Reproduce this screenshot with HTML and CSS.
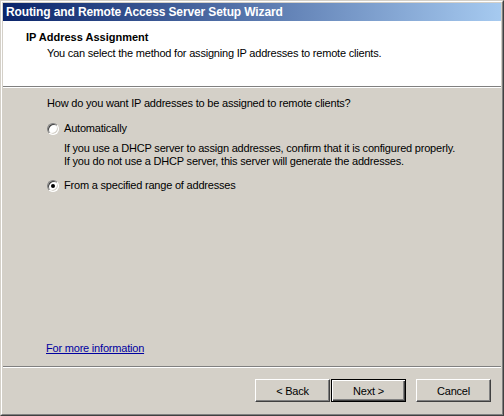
FILE: index.html
```html
<!DOCTYPE html>
<html>
<head>
<meta charset="utf-8">
<link rel="stylesheet" href="styles.css">
</head>
<body>
<div class="window">
  <div class="frame">
    <div class="titlebar">Routing and Remote Access Server Setup Wizard</div>
    <div class="header">
      <div class="h-title">IP Address Assignment</div>
      <div class="h-sub">You can select the method for assigning IP addresses to remote clients.</div>
    </div>
    <div class="sep"></div>
    <div class="content">
      <div class="question">How do you want IP addresses to be assigned to remote clients?</div>
      <div class="option">
        <span class="radio"></span>
        <span class="label">Automatically</span>
      </div>
      <div class="desc">
        <div>If you use a DHCP server to assign addresses, confirm that it is configured properly.</div>
        <div>If you do not use a DHCP server, this server will generate the addresses.</div>
      </div>
      <div class="option option2">
        <span class="radio checked"></span>
        <span class="label">From a specified range of addresses</span>
      </div>
      <a class="more" href="#">For more information</a>
    </div>
    <div class="sep"></div>
    <div class="footer">
      <button class="btn">&lt; Back</button>
      <button class="btn default">Next &gt;</button>
      <button class="btn cancel">Cancel</button>
    </div>
  </div>
</div>
</body>
</html>
```

FILE: styles.css
```css
html, body {
  margin: 0;
  padding: 0;
  background: #D4D0C8;
}
body {
  font-family: "Liberation Sans", Arial, sans-serif;
  font-size: 11px;
  letter-spacing: -0.2px;
  color: #000;
}
.window {
  width: 504px;
  height: 416px;
  box-sizing: border-box;
  border: 1px solid;
  border-color: #D4D0C8 #404040 #404040 #D4D0C8;
  background: #D4D0C8;
}
.frame {
  height: 100%;
  box-sizing: border-box;
  border: 1px solid;
  border-color: #FFFFFF #808080 #808080 #FFFFFF;
  padding: 1px;
  display: flex;
  flex-direction: column;
}
.titlebar {
  height: 18px;
  flex: none;
  background: linear-gradient(to right, #0A246A, #A6CAF0);
  color: #fff;
  font-weight: bold;
  font-size: 12px;
  letter-spacing: -0.12px;
  line-height: 18px;
  padding-left: 3px;
  white-space: nowrap;
}
.header {
  background: #fff;
  height: 65px;
  flex: none;
  box-sizing: border-box;
  padding-top: 10px;
}
.h-title {
  font-weight: bold;
  letter-spacing: 0;
  padding-left: 23px;
  line-height: 13px;
}
.h-sub {
  padding-left: 44px;
  margin-top: 3px;
  line-height: 13px;
}
.sep {
  height: 1px;
  flex: none;
  background: #808080;
  border-bottom: 1px solid #fff;
}
.content {
  flex: 1;
  display: flex;
  flex-direction: column;
  align-items: flex-start;
  padding: 9px 0 11px 44px;
  line-height: 13px;
}
.option {
  display: flex;
  align-items: center;
  margin-top: 12px;
}
.option2 {
  margin-top: 11px;
}
.radio {
  width: 12px;
  height: 12px;
  box-sizing: border-box;
  border-radius: 50%;
  background: #fff;
  border: 1px solid;
  border-color: #808080 #fff #fff #808080;
  box-shadow: inset 1px 1px 0 #404040, inset -1px -1px 0 #D4D0C8;
  position: relative;
  flex: none;
}
.radio.checked::after {
  content: "";
  position: absolute;
  left: 3px;
  top: 3px;
  width: 4px;
  height: 4px;
  border-radius: 50%;
  background: #000;
}
.label {
  margin-left: 5px;
}
.desc {
  padding-left: 17px;
  margin-top: 7px;
}
.more {
  margin-top: auto;
  margin-left: -1px;
  color: #0000A0;
  text-decoration: underline;
}
.footer {
  height: 45px;
  flex: none;
  display: flex;
  align-items: flex-start;
  padding-top: 11px;
  box-sizing: border-box;
  padding-left: 252px;
}
.btn {
  width: 75px;
  height: 23px;
  box-sizing: border-box;
  font-family: inherit;
  font-size: 11px;
  letter-spacing: -0.2px;
  color: #000;
  background: #D4D0C8;
  border: 1px solid;
  border-color: #fff #404040 #404040 #fff;
  box-shadow: inset -1px -1px 0 #808080;
  padding: 0;
  margin: 0;
}
.btn.default {
  margin-left: 1px;
  border: 1px solid #000;
  box-shadow: inset 1px 1px 0 #fff, inset -1px -1px 0 #404040, inset -2px -2px 0 #808080;
}
.btn.cancel {
  margin-left: 10px;
}
```
